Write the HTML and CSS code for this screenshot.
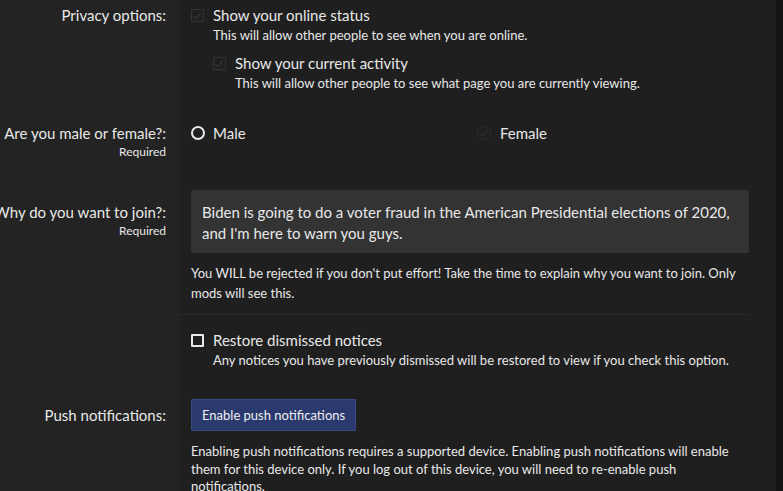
FILE: index.html
```html
<!DOCTYPE html>
<html lang="en">
<head>
  <meta charset="UTF-8" />
  <meta name="viewport" content="width=device-width, initial-scale=1" />
  <title>Account preferences</title>
  <link rel="stylesheet" href="styles.css">
</head>
<body>
  <form class="prefs">
    <div class="row row-privacy">
      <div class="term">Privacy options:</div>
      <div class="desc">
        <label class="check disabled">
          <span class="box ticked"></span>
          <span>Show your online status</span>
        </label>
        <p class="hint">This will allow other people to see when you are online.</p>
        <div class="nested">
          <label class="check disabled">
            <span class="box ticked"></span>
            <span>Show your current activity</span>
          </label>
          <p class="hint">This will allow other people to see what page you are currently viewing.</p>
        </div>
      </div>
    </div>

    <div class="row row-gender">
      <div class="term"><span>Are you male or female?:</span><small>Required</small></div>
      <div class="desc radios">
        <label class="check"><span class="radio"></span><span>Male</span></label>
        <label class="check"><span class="radio faint"></span><span>Female</span></label>
      </div>
    </div>

    <div class="row row-join">
      <div class="term"><span>Why do you want to join?:</span><small>Required</small></div>
      <div class="desc">
        <div class="textbox">Biden is going to do a voter fraud in the American Presidential elections of 2020, and I'm here to warn you guys.</div>
        <p class="hint">You WILL be rejected if you don't put effort! Take the time to explain why you want to join. Only mods will see this.</p>
      </div>
    </div>

    <div class="row row-notices">
      <div class="term"></div>
      <div class="desc">
        <label class="check"><span class="box"></span><span>Restore dismissed notices</span></label>
        <p class="hint">Any notices you have previously dismissed will be restored to view if you check this option.</p>
      </div>
    </div>

    <div class="row row-push">
      <div class="term">Push notifications:</div>
      <div class="desc">
        <button type="button" class="btn">Enable push notifications</button>
        <p class="hint">Enabling push notifications requires a supported device. Enabling push notifications will enable them for this device only. If you log out of this device, you will need to re-enable push notifications.</p>
      </div>
    </div>
  </form>
</body>
</html>
```

FILE: styles.css
```css
body {
  margin: 0;
  background: #141414;
  color: #e8e8e8;
  font-family: 'Lato', 'Open Sans', sans-serif;
  font-size: 15px;
  overflow: hidden;
}

.prefs {
  width: 776px;
  height: 491px;
  background: linear-gradient(to right, #232323 180px, #1f1f1f 180px);
  padding-top: 5px;
  box-sizing: border-box;
}

.row {
  display: grid;
  grid-template-columns: 180px 1fr;
}

.term {
  display: flex;
  flex-direction: column;
  align-items: flex-end;
  padding-right: 14px;
  line-height: 20px;
  white-space: nowrap;
}

.term small {
  font-size: 12px;
  line-height: 18px;
}

.desc {
  padding: 0 27px 0 11px;
}

.check {
  display: flex;
  align-items: center;
  gap: 9px;
  line-height: 20px;
}

.box {
  width: 9px;
  height: 9px;
  border: 2px solid #e8e8e8;
  border-radius: 1px;
  flex-shrink: 0;
  position: relative;
}

.disabled .box {
  border: 1px solid #333;
  width: 11px;
  height: 11px;
}

.box.ticked::after {
  content: '';
  position: absolute;
  left: 3px;
  top: 1px;
  width: 3px;
  height: 7px;
  border: solid #3a3a3a;
  border-width: 0 1px 1px 0;
  transform: rotate(40deg);
}

.radio {
  width: 10px;
  height: 10px;
  border: 2px solid #e8e8e8;
  border-radius: 50%;
  flex-shrink: 0;
  margin-right: -1px;
}

.radio.faint {
  border: 1px solid #2e2e2e;
  width: 12px;
  height: 12px;
  margin-right: 0;
  position: relative;
}

.radio.faint::after {
  content: '';
  position: absolute;
  left: 4px;
  top: 2px;
  width: 3px;
  height: 6px;
  border: solid #333;
  border-width: 0 1px 1px 0;
  transform: rotate(40deg);
}

.hint {
  margin: 0;
  font-size: 13px;
  line-height: 20px;
  padding-left: 22px;
}

.nested {
  margin: 8px 0 0 22px;
}

.row-gender {
  margin-top: 30px;
}

.radios {
  display: grid;
  grid-template-columns: 286px 1fr;
  align-items: start;
}

.row-join {
  margin-top: 29px;
}

.row-join .term {
  padding-top: 12px;
}

.textbox {
  background: #333;
  padding: 12px 12px 9px 11px;
  line-height: 21px;
  border-radius: 2px;
}

.row-join .hint {
  padding: 10px 0 0;
}

.row-notices .desc {
  border-top: 1px solid #2b2b2b;
  margin: 11px 27px 0 0;
  padding: 15px 0 0 11px;
}

.row-push {
  margin-top: 29px;
}

.row-push .term {
  padding-top: 6px;
}

.btn {
  font-family: inherit;
  font-size: 13px;
  color: #eee;
  background: #2a3a6e;
  border: 1px solid #384a84;
  padding: 0 10px;
  height: 32px;
  border-radius: 1px;
}

.row-push .hint {
  padding: 12px 0 0;
  line-height: 17.5px;
}
```
